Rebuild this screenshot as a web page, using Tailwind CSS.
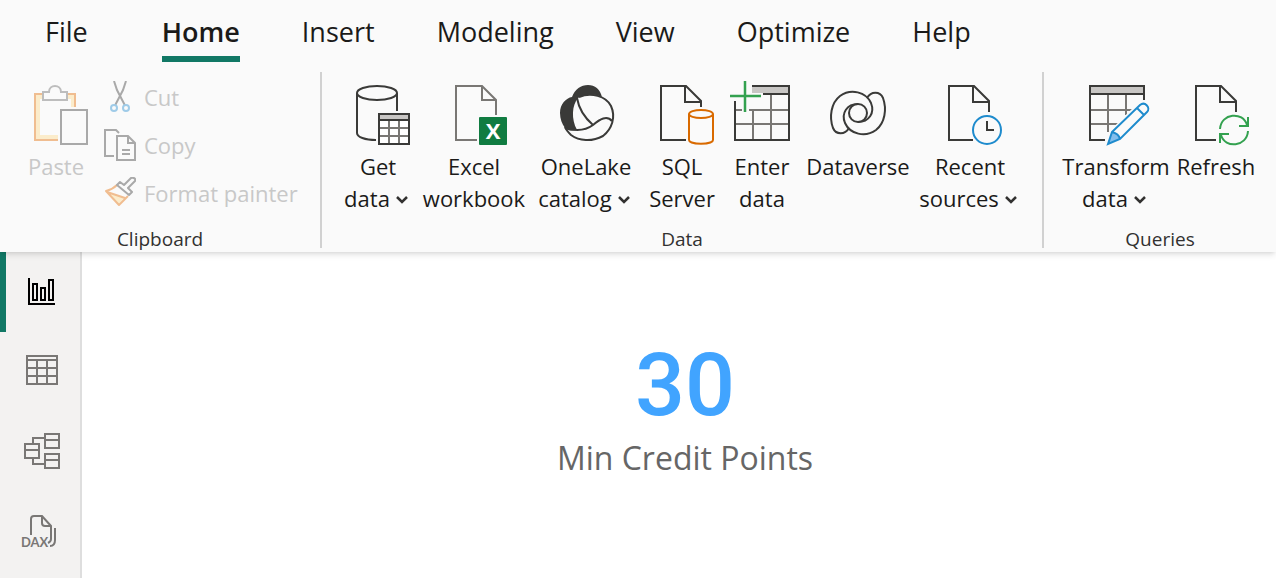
<!doctype html>
<html lang="en">

<head>
    <meta charset="utf-8">
    <meta name="viewport" content="width=device-width, initial-scale=1.0">
    <title>Min Credit Points</title>
    <script src="https://cdn.jsdelivr.net/npm/@tailwindcss/browser@4"></script>
</head>

<body class="flex flex-col min-h-screen bg-white font-['Open_Sans',sans-serif] text-[#1b1a19]">
    <header class="relative z-10 bg-[#fafafa] shadow-md">
        <!-- Ribbon tabs -->
        <nav class="flex h-[62px] pl-[45px] gap-[62px] text-[27px] leading-[64px] whitespace-nowrap">
            <a href="#" class="mr-3">File</a>
            <a href="#" class="font-semibold border-b-6 border-[#117865]" aria-current="page">Home</a>
            <a href="#">Insert</a>
            <a href="#">Modeling</a>
            <a href="#">View</a>
            <a href="#">Optimize</a>
            <a href="#">Help</a>
        </nav>

        <div class="flex h-[190px] pt-[10px] pb-1 text-[22px] leading-8">
            <!-- Clipboard -->
            <section class="flex flex-col w-[322px] border-r-2 border-[#d1d1d1]" aria-label="Clipboard">
                <div class="flex grow pl-5 text-[#c8c8c8]">
                    <button class="flex flex-col items-center self-start w-[72px] pt-1" disabled>
                        <svg class="size-[72px] mb-[2px]" viewBox="0 0 72 72" fill="none" stroke-width="2">
                            <path stroke="#fbeccb" stroke-width="4" d="M38 61H18V21h35v10" />
                            <path stroke="#f0bd90" d="M38 64H15V18h40v13" />
                            <path fill="#fafafa" stroke="#bdbdbd" d="M23 16h6c0-8 12-8 12 0h6v8H23z" />
                            <path fill="#fafafa" stroke="#fafafa" stroke-width="6" d="M41 34h26v34H41z" />
                            <path fill="#fafafa" stroke="#a9a9a9" d="M41 34h26v34H41z" />
                        </svg>
                        Paste
                    </button>
                    <div class="flex flex-col pl-3 pt-[1px]">
                        <button class="flex items-center gap-2 h-12" disabled>
                            <svg class="size-8" viewBox="0 0 32 32" fill="none" stroke-width="2">
                                <path stroke="#a9a9a9" d="M10 0l3 9 8 15.500M22 0l-3 9-8 15.500" />
                                <circle cx="10" cy="27" r="3" stroke="#9fcbe8" />
                                <circle cx="22" cy="27" r="3" stroke="#9fcbe8" />
                            </svg>
                            Cut
                        </button>
                        <button class="flex items-center gap-2 h-12" disabled>
                            <svg class="size-8" viewBox="0 0 32 32" fill="none" stroke="#a9a9a9" stroke-width="2">
                                <path d="M10 27H1V1h11l3 3M13 7h11l7 7v17H13zM24 7v7h7M18 21h8M18 25h8" />
                            </svg>
                            Copy
                        </button>
                        <button class="flex items-center gap-2 h-12" disabled>
                            <svg class="size-8" viewBox="0 0 32 32" fill="none" stroke-width="2" stroke-linejoin="round">
                                <path fill="#fbeccb" d="M3 15l17 6-6 7z" />
                                <path stroke="#f0bd90" d="M13 8c-3 3-7 5-11 6l13 14 9-9M3 15l18 6" />
                                <path fill="#fafafa" stroke="#a9a9a9" d="M13 8l3-3 4 3 7-7c3-1 5 1 4 3l-7 7 4 4-3 3z" />
                            </svg>
                            Format painter
                        </button>
                    </div>
                </div>
                <h2 class="pt-[2px] text-[19px] leading-[18px] text-center text-[#323130]">Clipboard</h2>
            </section>

            <!-- Data -->
            <section class="flex flex-col grow border-r-2 border-[#d1d1d1]" aria-label="Data">
                <div class="flex grow justify-center items-start pt-1">
                    <button class="flex flex-col items-center w-20">
                        <svg class="size-[72px] mb-[2px]" viewBox="0 0 72 72" fill="none" stroke="#3a3a38" stroke-width="2">
                            <ellipse cx="35" cy="17" rx="20" ry="7" />
                            <path d="M15 17v40c0 4 8 7 19 7M55 17v18" />
                            <path fill="#fff" stroke="none" d="M37 38h30v30H37z" />
                            <path fill="#c8c6c4" stroke="none" d="M37 38h30v6H37z" />
                            <path stroke="#797774" d="M37 52h30M37 60h30M47 45v23M57 45v23" />
                            <path d="M37 38h30v30H37zM37 44h30" />
                        </svg>
                        <span>Get</span>
                        <span class="flex items-center gap-[6px] pr-1">data
                            <svg class="w-3 h-2 mt-1" viewBox="0 0 12 8" fill="none" stroke="#323130" stroke-width="2.500"><path d="M1 1l5 5 5-5" /></svg>
                        </span>
                    </button>
                    <button class="flex flex-col items-center w-28">
                        <svg class="size-[72px] mb-[2px]" viewBox="0 0 72 72" fill="none" stroke="#797774" stroke-width="2">
                            <path d="M39 64H18V10h26l14 14v15M44 10v14h14" />
                            <rect x="41" y="41" width="28" height="28" rx="1" fill="#107c41" stroke="none" />
                            <text x="55" y="63" text-anchor="middle" font-size="22" font-weight="700" fill="#fff" stroke="none">X</text>
                        </svg>
                        <span>Excel</span>
                        <span>workbook</span>
                    </button>
                    <button class="flex flex-col items-center w-28">
                        <svg class="size-[72px] mb-[2px]" viewBox="0 0 72 72" fill="none" stroke="#3a3a38" stroke-width="2">
                            <path fill="#3a3a38" stroke="none" d="M22 21C25 13 31 9 38 9c7 0 12 4 14 12-9-4-17-3-24 1-6 7-7 21-1 32-5 1-9 1-12-2-3-4-5-9-5-15 0-9 6-15 12-16z" />
                            <path d="M29 21c12-5 27-1 32 9 5 11 1 23-8 30-11 6-24 5-32-1-3-3-5-5-6-8" />
                            <path d="M27 22c2 12 8 20 16 27M15 52c10 3 20 3 28-3 7-6 14-10 19-4" />
                        </svg>
                        <span>OneLake</span>
                        <span class="flex items-center gap-[6px] pr-1">catalog
                            <svg class="w-3 h-2 mt-1" viewBox="0 0 12 8" fill="none" stroke="#323130" stroke-width="2.500"><path d="M1 1l5 5 5-5" /></svg>
                        </span>
                    </button>
                    <button class="flex flex-col items-center w-20">
                        <svg class="size-[72px] mb-[2px]" viewBox="0 0 72 72" fill="none" stroke="#3a3a38" stroke-width="2">
                            <path d="M40 64H15V10h25l15 15v6M39 10v16h16" />
                            <g stroke="#d96a00">
                                <ellipse cx="55" cy="38" rx="12" ry="4" />
                                <path d="M43 38v26c0 5 24 5 24 0V38" />
                            </g>
                        </svg>
                        <span>SQL</span>
                        <span>Server</span>
                    </button>
                    <button class="flex flex-col items-center w-20">
                        <svg class="size-[72px] mb-[2px]" viewBox="0 0 72 72" fill="none" stroke="#3a3a38" stroke-width="2">
                            <path fill="#c8c6c4" stroke="none" d="M26 10h37v7H26z" />
                            <path stroke="#797774" d="M10 34h6M23 34h40M10 48h53M27 34v30M45 18v46" />
                            <path d="M9 25v39h54V10H26M37 18h26" />
                            <path stroke="#33a14f" stroke-width="2.500" d="M19 5v31M4 20h31" />
                        </svg>
                        <span>Enter</span>
                        <span>data</span>
                    </button>
                    <button class="flex flex-col items-center w-28">
                        <svg class="size-[72px] mb-[2px]" viewBox="0 0 72 72" fill="none" stroke="#3a3a38" stroke-width="2">
                            <circle cx="36" cy="37" r="9" />
                            <path d="M27 52c-4 7-13 7-16 0C7 41 9 27 18 20c11-8 26-4 31 7 4 10-2 19-13 19" />
                            <path d="M45 22c4-7 13-7 16 0 4 11 2 25-7 32-11 8-26 4-31-7-4-10 2-19 13-19" />
                        </svg>
                        <span>Dataverse</span>
                    </button>
                    <button class="flex flex-col items-center w-28">
                        <svg class="size-[72px] mb-[2px]" viewBox="0 0 72 72" fill="none" stroke="#3a3a38" stroke-width="2">
                            <path d="M39 64H15V10h25l15 15v11M39 10v16h16" />
                            <circle cx="53" cy="54" r="14" stroke="#1e8bcd" />
                            <path d="M53 45v9h7" />
                        </svg>
                        <span>Recent</span>
                        <span class="flex items-center gap-[6px] pr-1">sources
                            <svg class="w-3 h-2 mt-1" viewBox="0 0 12 8" fill="none" stroke="#323130" stroke-width="2.500"><path d="M1 1l5 5 5-5" /></svg>
                        </span>
                    </button>
                </div>
                <h2 class="pt-[2px] text-[19px] leading-[18px] text-center text-[#323130]">Data</h2>
            </section>

            <!-- Queries -->
            <section class="flex flex-col w-[232px]" aria-label="Queries">
                <div class="flex grow justify-center items-start pt-1">
                    <button class="flex flex-col items-center w-28">
                        <svg class="size-[72px] mb-[2px]" viewBox="0 0 72 72" fill="none" stroke="#3a3a38" stroke-width="2">
                            <path fill="#c8c6c4" stroke="none" d="M10 10h54v8H10z" />
                            <path stroke="#797774" d="M10 34h42M10 48h28M28 19v37M46 19v20" />
                            <path d="M25 64H10V10h54v14M10 18h54" />
                            <path fill="#fafafa" stroke="#fafafa" stroke-width="6" d="M28 68l5-12 27-27c4-4 11 3 8 7L40 63z" />
                            <path fill="#83beec" stroke="none" d="M28 68l4-12c4 1 7 3 8 7z" />
                            <path stroke="#1e8bcd" d="M28 68l4-12 28-27c5-4 11 3 7 7L40 63zM32 56c4 1 7 3 8 7M57 32l7 7" />
                        </svg>
                        <span>Transform</span>
                        <span class="flex items-center gap-[6px] pr-1">data
                            <svg class="w-3 h-2 mt-1" viewBox="0 0 12 8" fill="none" stroke="#323130" stroke-width="2.500"><path d="M1 1l5 5 5-5" /></svg>
                        </span>
                    </button>
                    <button class="flex flex-col items-center w-[88px]">
                        <svg class="size-[72px] mb-[2px]" viewBox="0 0 72 72" fill="none" stroke="#3a3a38" stroke-width="2">
                            <path d="M36 64H16V10h25l15 15v11M40 10v16h16" />
                            <path stroke="#33a14f" d="M40 53c1-16 23-18 27-4M68 41v9h-9M68 55c-1 16-23 18-27 4M40 67v-9h9" />
                        </svg>
                        <span>Refresh</span>
                    </button>
                </div>
                <h2 class="pt-[2px] text-[19px] leading-[18px] text-center text-[#323130]">Queries</h2>
            </section>
        </div>
    </header>

    <div class="flex grow">
        <!-- View switcher -->
        <aside class="flex flex-col w-[82px] bg-[#f3f2f1] border-r-2 border-[#dedede]">
            <button class="relative flex items-center justify-center h-20" aria-label="Report view">
                <span class="absolute left-0 inset-y-0 w-[6px] bg-[#117865]"></span>
                <svg class="size-10" viewBox="0 0 40 40" fill="none" stroke="#000" stroke-width="2">
                    <path d="M9 6v26h26M13 12h4v16h-4zM21 16h4v12h-4zM29 8h4v20h-4z" />
                </svg>
            </button>
            <button class="flex items-center justify-center h-20" aria-label="Table view">
                <svg class="size-10" viewBox="0 0 40 40" fill="none" stroke="#797775" stroke-width="2">
                    <path d="M7 4h30v28H7zM7 8h30M7 16h30M7 24h30M17 8v24M27 8v24" />
                </svg>
            </button>
            <button class="flex items-center justify-center h-20" aria-label="Model view">
                <svg class="size-10" viewBox="0 0 40 40" fill="none" stroke="#797775" stroke-width="2">
                    <path d="M5 12h14v14H5zM5 18h14M25 2h14v14H25zM25 8h14M25 22h14v14H25zM25 28h14M13 12V6h12M13 26v6h12" />
                </svg>
            </button>
            <button class="flex items-center justify-center h-20" aria-label="DAX query view">
                <svg class="size-10" viewBox="0 0 40 40" fill="none" stroke="#797775" stroke-width="2">
                    <path d="M11 23V7c0-2 1-3 3-3h8l9 10v13c0 2-1 3-3 4M22 4v7c0 2 1 3 3 3h6M35 16v12c0 4-2 6-5 6" />
                    <text x="1" y="35" font-size="13" font-weight="700" fill="#797775" stroke="none" class="font-['Lato',sans-serif]">DAX</text>
                </svg>
            </button>
        </aside>

        <main class="flex flex-col grow items-center pl-3 pt-[93px]">
            <p class="font-['Roboto',sans-serif] font-medium text-[88px] leading-[80px] text-[#41a4ff]">30</p>
            <p class="mt-[13px] text-[32px] leading-10 text-[#666]">Min Credit Points</p>
        </main>
    </div>
</body>

</html>
